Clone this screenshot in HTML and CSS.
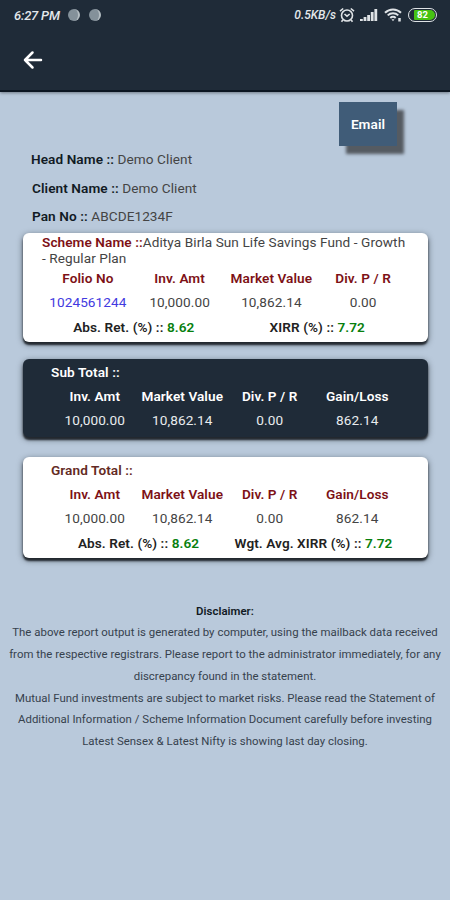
FILE: index.html
```
<!DOCTYPE html>
<html lang="en">
<head>
    <meta charset="UTF-8">
    <meta name="viewport" content="width=device-width, initial-scale=1.0">
    <title>Portfolio Report</title>
    <link rel="stylesheet" href="styles.css">
</head>
<body>
    <header class="app-header">
        <div class="status-bar">
            <span class="time">6:27 PM</span>
            <span class="dot"></span>
            <span class="dot"></span>
            <span class="speed">0.5KB/s</span>
            <svg class="alarm" width="16" height="16" viewBox="0 0 16 16" fill="none" stroke="#dfe3e6" stroke-width="1.6">
                <circle cx="8" cy="8.5" r="5.5"/>
                <path d="M1 4.2L4.2 1.5M15 4.2L11.8 1.5M5.5 7l2.5 2.2L10.7 7M3.8 13l-1.3 1.7M12.2 13l1.3 1.7"/>
            </svg>
            <svg class="signal" width="18" height="14" viewBox="0 0 18 14" fill="#dfe3e6">
                <path d="M0 11h2.8v2H0zM3.6 9h2.8v4H3.6zM7.2 7H10v6H7.2zM10.8 4h2.8v9h-2.8zM14.4 1h2.8v12h-2.8z"/>
            </svg>
            <svg class="wifi" width="19" height="14" viewBox="0 0 19 14" fill="none" stroke="#dfe3e6" stroke-width="2">
                <path d="M1 4.8c4.5-4.4 11.5-4.4 16 0M3.7 7.4c3-2.9 7.6-2.9 10.6 0M6.3 9.9c1.5-1.4 3.9-1.4 5.4 0"/>
                <path d="M7.5 11.3h3L9 13.2z" fill="#dfe3e6" stroke="none"/>
                <path d="M15.5 10v3.5" stroke-width="2.5"/>
            </svg>
            <span class="battery"><span class="level">82</span></span>
        </div>
        <a class="back" href="#" aria-label="Back">
            <svg width="20" height="20" viewBox="0 0 20 20" fill="none" stroke="#fff" stroke-width="2.5" stroke-linecap="round" stroke-linejoin="round">
                <path d="M18 10H2M9.5 2.5L2 10l7.5 7.5"/>
            </svg>
        </a>
    </header>

    <main>
        <button class="email-btn">Email</button>

        <div class="client">
            <p><b>Head Name ::</b> Demo Client</p>
            <p><b>Client Name ::</b> Demo Client</p>
            <p><b>Pan No ::</b> ABCDE1234F</p>
        </div>

        <section class="card scheme">
            <p class="scheme-name"><b>Scheme Name ::</b>Aditya Birla Sun Life Savings Fund - Growth<br>- Regular Plan</p>
            <div class="grid">
                <b>Folio No</b><b>Inv. Amt</b><b>Market Value</b><b>Div. P / R</b>
                <a href="#">1024561244</a><span>10,000.00</span><span>10,862.14</span><span>0.00</span>
            </div>
            <div class="returns">
                <p>Abs. Ret. (%) :: <span>8.62</span></p>
                <p>XIRR (%) :: <span>7.72</span></p>
            </div>
        </section>

        <section class="card total sub-total">
            <h2>Sub Total ::</h2>
            <div class="grid">
                <b>Inv. Amt</b><b>Market Value</b><b>Div. P / R</b><b>Gain/Loss</b>
                <span>10,000.00</span><span>10,862.14</span><span>0.00</span><span>862.14</span>
            </div>
        </section>

        <section class="card total grand-total">
            <h2>Grand Total ::</h2>
            <div class="grid">
                <b>Inv. Amt</b><b>Market Value</b><b>Div. P / R</b><b>Gain/Loss</b>
                <span>10,000.00</span><span>10,862.14</span><span>0.00</span><span>862.14</span>
            </div>
            <div class="returns">
                <p>Abs. Ret. (%) :: <span>8.62</span></p>
                <p>Wgt. Avg. XIRR (%) :: <span>7.72</span></p>
            </div>
        </section>

        <footer class="disclaimer">
            <h3>Disclaimer:</h3>
            <p>The above report output is generated by computer, using the mailback data received<br>
            from the respective registrars. Please report to the administrator immediately, for any<br>
            discrepancy found in the statement.</p>
            <p>Mutual Fund investments are subject to market risks. Please read the Statement of<br>
            Additional Information / Scheme Information Document carefully before investing<br>
            Latest Sensex &amp; Latest Nifty is showing last day closing.</p>
        </footer>
    </main>
</body>
</html>
```
FILE: styles.css
```
* {
    box-sizing: border-box;
}
body {
    font-family: Roboto, sans-serif;
    background-color: #b9c9db;
    margin: 0;
    min-height: 900px;
    font-size: 13.6px;
    letter-spacing: 0.08px;
    color: #444;
}
p, h2, h3 {
    margin: 0;
}
b {
    font-weight: 600;
}
.app-header {
    height: 92px;
    background-color: #1f2b38;
    border-bottom: 2px solid #0c1622;
    box-shadow: 0 1px 3px rgba(0, 0, 0, 0.4);
}
.status-bar {
    display: flex;
    align-items: center;
    height: 30px;
    padding: 0 13px 0 14px;
    color: #e4e8eb;
}
.time, .speed {
    font-style: italic;
    font-weight: 500;
    font-size: 13px;
    letter-spacing: -0.2px;
}
.time {
    width: 54px;
}
.dot {
    width: 12px;
    height: 12px;
    margin-right: 9px;
    border-radius: 50%;
    background-color: #84919a;
    border-right: 2px solid #b4bdc2;
}
.speed {
    margin-left: auto;
    font-size: 12px;
    letter-spacing: 0;
}
.alarm {
    margin-left: 3px;
}
.signal {
    margin-left: 5px;
}
.wifi {
    margin-left: 6px;
}
.battery {
    width: 29px;
    height: 14px;
    margin-left: 5px;
    padding: 1px;
    border: 1.5px solid #dfe3e6;
    border-radius: 7px;
}
.level {
    display: block;
    height: 10px;
    margin-left: 4px;
    border-radius: 1px 5px 5px 1px;
    background-color: #46c313;
    color: #fff;
    font-size: 9.5px;
    line-height: 10px;
    font-weight: 700;
    padding-left: 3px;
}
.back {
    display: block;
    width: 20px;
    height: 20px;
    margin: 20px 0 0 23px;
}
main {
    display: flex;
    flex-direction: column;
}
.email-btn {
    align-self: flex-end;
    width: 58px;
    height: 44px;
    margin: 10px 53px 0 0;
    padding: 0;
    border: none;
    background-color: #405c78;
    color: #fff;
    font: 600 13.6px Roboto, sans-serif;
    letter-spacing: 0.08px;
    box-shadow: 7px 8px 3px #555b62;
}
.client {
    margin-top: -1px;
    padding-left: 31px;
    line-height: 28.6px;
}
.client p + p {
    padding-left: 1px;
}
.client b {
    color: #111a24;
}
.card {
    margin: 0 22px 0 23px;
    border-radius: 6px;
    background-color: #fff;
    box-shadow: 0 3px 2px rgba(20, 25, 30, 0.85), 0 2px 6px rgba(20, 25, 30, 0.6);
}
.card b, .card h2 {
    color: #7d1116;
}
.card h2 {
    font-size: 13.6px;
    font-weight: 600;
    line-height: 24px;
}
.grid {
    display: grid;
    grid-template-columns: repeat(4, 1fr);
    text-align: center;
    line-height: 24.4px;
}
.grid a {
    color: #423ae0;
    text-decoration: none;
}
.returns {
    display: grid;
    grid-template-columns: 1fr 1fr;
    text-align: center;
    line-height: 24px;
    font-weight: 600;
    color: #222;
}
.returns span {
    color: #087f0e;
}
.scheme {
    height: 109px;
    margin-top: 2px;
    padding: 1px 19px 0;
}
.scheme-name {
    line-height: 16px;
    white-space: nowrap;
}
.total {
    padding: 1px 27px 0 28px;
}
.sub-total {
    height: 78px;
    margin-top: 17px;
    background-color: #1f2b38;
    color: #e8ebee;
}
.card.sub-total b, .card.sub-total h2 {
    color: #fff;
}
.grand-total {
    height: 101px;
    margin-top: 20px;
}
.card.grand-total h2 {
    color: #632a24;
}
.disclaimer {
    margin-top: 43px;
    text-align: center;
    font-size: 11.4px;
    letter-spacing: 0.03px;
    line-height: 21.7px;
    color: #36414d;
}
.disclaimer h3 {
    font-size: 11.4px;
    font-weight: 600;
    color: #111a24;
}
```
